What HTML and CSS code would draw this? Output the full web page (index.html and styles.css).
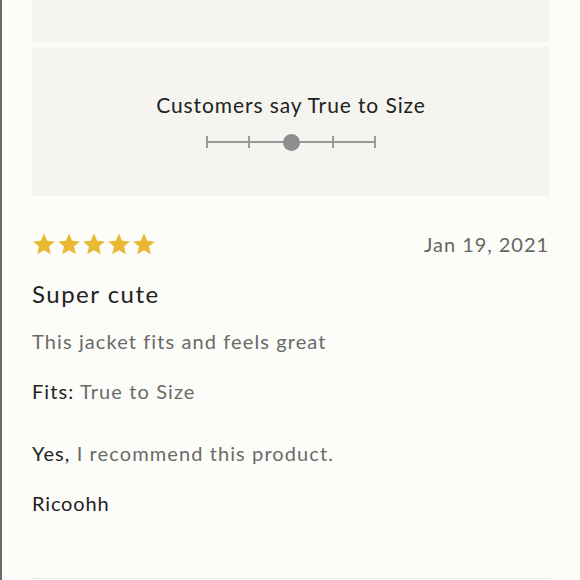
FILE: index.html
```html
<html>
  <head>
    <meta http-equiv="content-type" content="text/html; charset=utf-8" />
    <link rel="stylesheet" href="styles.css">
  </head>
  <body>
    <div class="review-page">
      <div class="panel panel-top"></div>
      <div class="panel fit-panel">
        <h3 class="fit-title">Customers say True to Size</h3>
        <div class="fit-scale">
          <span class="tick"></span>
          <span class="tick"></span>
          <span class="dot"></span>
          <span class="tick"></span>
          <span class="tick"></span>
        </div>
      </div>

      <div class="review">
        <div class="review-head">
          <div class="stars">
            <svg viewBox="0 0 24 24"><path d="M12 1.5l3.1 7.2 7.8.7-5.9 5.2 1.8 7.7L12 18.2l-6.8 4.1 1.8-7.7L1.1 9.4l7.8-.7z"/></svg>
            <svg viewBox="0 0 24 24"><path d="M12 1.5l3.1 7.2 7.8.7-5.9 5.2 1.8 7.7L12 18.2l-6.8 4.1 1.8-7.7L1.1 9.4l7.8-.7z"/></svg>
            <svg viewBox="0 0 24 24"><path d="M12 1.5l3.1 7.2 7.8.7-5.9 5.2 1.8 7.7L12 18.2l-6.8 4.1 1.8-7.7L1.1 9.4l7.8-.7z"/></svg>
            <svg viewBox="0 0 24 24"><path d="M12 1.5l3.1 7.2 7.8.7-5.9 5.2 1.8 7.7L12 18.2l-6.8 4.1 1.8-7.7L1.1 9.4l7.8-.7z"/></svg>
            <svg viewBox="0 0 24 24"><path d="M12 1.5l3.1 7.2 7.8.7-5.9 5.2 1.8 7.7L12 18.2l-6.8 4.1 1.8-7.7L1.1 9.4l7.8-.7z"/></svg>
          </div>
          <span class="date">Jan 19, 2021</span>
        </div>
        <h2 class="review-title">Super cute</h2>
        <p class="review-body">This jacket fits and feels great</p>
        <p class="review-fit"><b>Fits:</b> True to Size</p>
        <p class="recommend"><b>Yes,</b> I recommend this product.</p>
        <p class="author">Ricoohh</p>
      </div>
      <div class="divider"></div>
    </div>
  </body>
</html>
```

FILE: styles.css
```css
body {
  margin: 0;
  padding: 0;
  background: #fcfcf8;
  font-family: Lato, "Noto Sans", sans-serif;
}
.review-page {
  border-left: 2px solid #6b6b6b;
  height: 580px;
  padding: 0 30px;
  box-sizing: border-box;
  overflow: hidden;
}
.panel {
  background: #f5f4f0;
  border-radius: 2px;
}
.panel-top {
  height: 42px;
  margin-bottom: 5px;
}
.fit-panel {
  height: 149px;
  padding-top: 45px;
  box-sizing: border-box;
  text-align: center;
}
.fit-title {
  margin: 0;
  font-size: 21px;
  line-height: 26px;
  font-weight: 400;
  letter-spacing: 0.9px;
  color: #222;
}
.fit-scale {
  position: relative;
  width: 170px;
  height: 18px;
  margin: 15px auto 0;
  display: flex;
  justify-content: space-between;
  align-items: center;
}
.fit-scale::before {
  content: "";
  position: absolute;
  left: 0;
  right: 0;
  top: 8px;
  height: 2px;
  background: #9a9a9a;
}
.tick {
  position: relative;
  width: 2px;
  height: 12px;
  background: #9a9a9a;
}
.dot {
  position: relative;
  width: 17px;
  height: 17px;
  margin: 0 -8px;
  border-radius: 50%;
  background: #8e8e8e;
}
.review {
  padding-top: 36px;
}
.review-head {
  display: flex;
  justify-content: space-between;
  align-items: center;
  height: 24px;
}
.stars {
  display: flex;
  gap: 1px;
}
.stars svg {
  width: 24px;
  height: 24px;
  fill: #eab933;
}
.date {
  font-size: 20px;
  line-height: 24px;
  letter-spacing: 0.95px;
  margin-right: 1px;
  color: #666;
}
.review-title {
  margin: 23px 0 0;
  font-size: 24px;
  line-height: 30px;
  font-weight: 400;
  letter-spacing: 1.5px;
  color: #222;
}
.review-body,
.review-fit,
.recommend,
.author {
  font-size: 20px;
  line-height: 24px;
  letter-spacing: 1.1px;
  color: #6a6a6a;
  margin: 0;
}
.review-body {
  margin-top: 20px;
}
.review-fit {
  margin-top: 26px;
}
.recommend {
  margin-top: 38px;
}
.author {
  margin-top: 26px;
  letter-spacing: 0.85px;
  color: #222;
}
b {
  font-weight: 400;
  color: #222;
}
.divider {
  margin-top: 63px;
  border-top: 1px dotted #d8d8d4;
}
```
